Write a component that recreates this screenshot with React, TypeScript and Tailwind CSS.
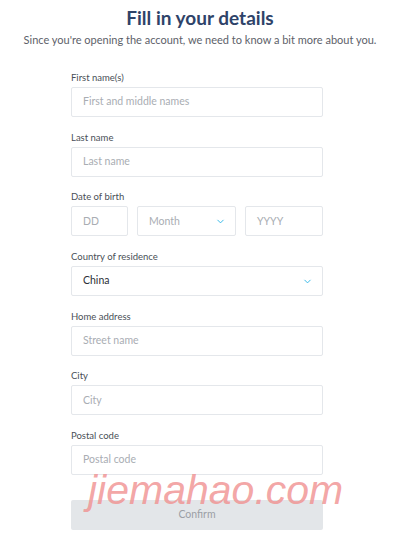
import { ChevronDown } from 'lucide-react';

const font = { fontFamily: 'Lato, "Noto Sans", sans-serif' };

function Field({ label, placeholder }: { label: string; placeholder: string }) {
  return (
    <div className="flex flex-col">
      <label className="text-[9.5px] leading-[12px] text-[#4a4f57] mb-[3px]">{label}</label>
      <div className="h-[30px] border border-[#e4e7eb] rounded-[2px] flex items-center px-[11px] text-[10.5px] text-[#a9adb3]">
        {placeholder}
      </div>
    </div>
  );
}

export default function App() {
  return (
    <div className="relative w-[400px] h-[534px] bg-white overflow-hidden" style={font}>
      <div className="flex flex-col items-center pt-[6px]">
        <h1 className="text-[19px] leading-[24px] font-bold text-[#2e4369]">Fill in your details</h1>
        <p className="text-[11px] leading-[16px] text-[#5d6169] mt-[2px]">
          Since you're opening the account, we need to know a bit more about you.
        </p>
      </div>

      <div className="w-[252px] ml-[71px] mt-[24px] flex flex-col gap-[14.7px]">
        <Field label="First name(s)" placeholder="First and middle names" />
        <Field label="Last name" placeholder="Last name" />

        <div className="flex flex-col">
          <label className="text-[9.5px] leading-[12px] text-[#4a4f57] mb-[3px]">Date of birth</label>
          <div className="flex gap-[9px]">
            <div className="w-[57px] h-[30px] border border-[#e4e7eb] rounded-[2px] flex items-center px-[11px] text-[10.5px] text-[#a9adb3]">DD</div>
            <div className="w-[99px] h-[30px] border border-[#e4e7eb] rounded-[2px] flex items-center justify-between pl-[11px] pr-[9px] text-[10.5px] text-[#a9adb3]">
              Month
              <ChevronDown className="w-[11px] h-[11px] text-[#2bb5e6]" strokeWidth={2} />
            </div>
            <div className="flex-1 h-[30px] border border-[#e4e7eb] rounded-[2px] flex items-center px-[11px] text-[10.5px] text-[#a9adb3]">YYYY</div>
          </div>
        </div>

        <div className="flex flex-col">
          <label className="text-[9.5px] leading-[12px] text-[#4a4f57] mb-[3px]">Country of residence</label>
          <div className="h-[30px] border border-[#e4e7eb] rounded-[2px] flex items-center justify-between pl-[11px] pr-[9px] text-[10.5px] text-[#2b2f36]">
            China
            <ChevronDown className="w-[11px] h-[11px] text-[#2bb5e6]" strokeWidth={2} />
          </div>
        </div>

        <Field label="Home address" placeholder="Street name" />
        <Field label="City" placeholder="City" />
        <Field label="Postal code" placeholder="Postal code" />

        <button className="mt-[10px] h-[30px] bg-[#e3e6e9] rounded-[2px] text-[10.5px] text-[#9b9fa5]">Confirm</button>
      </div>

      <div
        className="absolute left-[88px] top-[466px] text-[41px] leading-[48px] italic text-[#f08f8f]/80 pointer-events-none"
        style={{ fontFamily: '"Liberation Sans", Arial, sans-serif' }}
      >
        jiemahao.com
      </div>
    </div>
  );
}
